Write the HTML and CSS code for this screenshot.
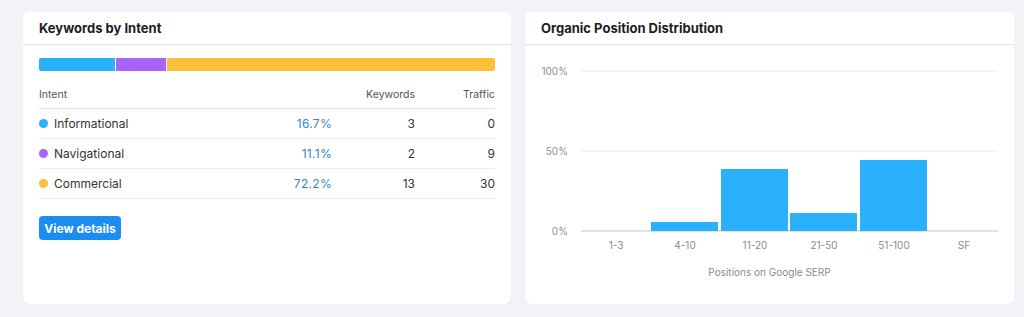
FILE: index.html
```html
<!DOCTYPE html>
<html lang="en">
<head>
    <meta charset="UTF-8">
    <meta name="viewport" content="width=device-width, initial-scale=1.0">
    <title>Overview</title>
    <link rel="stylesheet" href="styles.css">
</head>
<body>

<div class="cards">
    <!-- Keywords by intent -->
    <div class="card">
        <div class="card-head">Keywords by Intent</div>
        <div class="card-body intent-body">
            <div class="intent-bar">
                <span class="seg seg-info" style="width: 16.7%"></span>
                <span class="seg seg-nav" style="width: 11.1%"></span>
                <span class="seg seg-com" style="width: 72.2%"></span>
            </div>

            <div class="intent-table">
                <div class="row row-head">
                    <span>Intent</span>
                    <span></span>
                    <span class="num">Keywords</span>
                    <span class="num">Traffic</span>
                </div>
                <div class="row">
                    <span class="name"><i class="dot dot-info"></i>Informational</span>
                    <span class="num pct">16.7%</span>
                    <span class="num">3</span>
                    <span class="num">0</span>
                </div>
                <div class="row">
                    <span class="name"><i class="dot dot-nav"></i>Navigational</span>
                    <span class="num pct">11.1%</span>
                    <span class="num">2</span>
                    <span class="num">9</span>
                </div>
                <div class="row">
                    <span class="name"><i class="dot dot-com"></i>Commercial</span>
                    <span class="num pct">72.2%</span>
                    <span class="num">13</span>
                    <span class="num">30</span>
                </div>
            </div>

            <button type="button" class="details-btn">View details</button>
        </div>
    </div>

    <!-- Organic position distribution -->
    <div class="card">
        <div class="card-head">Organic Position Distribution</div>
        <div class="card-body">
            <svg class="chart" width="489" height="259" viewBox="0 0 489 259">
                <g class="grid">
                    <line x1="56" y1="26" x2="473" y2="26"></line>
                    <line x1="56" y1="106" x2="473" y2="106"></line>
                </g>
                <line class="axis" x1="56" y1="186" x2="473" y2="186"></line>

                <g class="ylabels" text-anchor="end">
                    <text x="43" y="30">100%</text>
                    <text x="43" y="110">50%</text>
                    <text x="43" y="190">0%</text>
                </g>

                <!-- 1 / 7 / 2 / 8 keywords out of 18 -->
                <g class="bars">
                    <rect x="126" y="177" width="67" height="9"></rect>
                    <rect x="196" y="124" width="67" height="62"></rect>
                    <rect x="265" y="168" width="67" height="18"></rect>
                    <rect x="335" y="115" width="67" height="71"></rect>
                </g>

                <g class="xlabels" text-anchor="middle">
                    <text x="91" y="204">1-3</text>
                    <text x="160" y="204">4-10</text>
                    <text x="230" y="204">11-20</text>
                    <text x="299" y="204">21-50</text>
                    <text x="369" y="204">51-100</text>
                    <text x="439" y="204">SF</text>
                </g>

                <text class="xtitle" x="244.5" y="231" text-anchor="middle">Positions on Google SERP</text>
            </svg>
        </div>
    </div>
</div>

</body>
</html>
```

FILE: styles.css
```css
body {
    font-family: Inter, "Noto Sans", Arial, sans-serif;
    margin: 0;
    padding: 0;
    background-color: #f2f3f7;
    color: #333;
}

.cards {
    display: grid;
    grid-template-columns: 488px 489px;
    gap: 14px;
    padding: 12px 10px 0 23px;
}

.card {
    height: 292px;
    background-color: #fff;
    border-radius: 6px;
    box-shadow: 0 1px 2px rgba(0, 0, 0, 0.06);
    overflow: hidden;
}

.card-head {
    height: 32px;
    line-height: 32px;
    padding-left: 16px;
    font-size: 13px;
    font-weight: 700;
    color: #1d1d1f;
    border-bottom: 1px solid #e7e8ea;
    box-shadow: 0 1px 1px rgba(0, 0, 0, 0.03);
}

/* Left card */
.intent-body {
    padding: 13px 16px 0 16px;
}

.intent-bar {
    display: flex;
    gap: 1px;
    height: 13px;
}

.seg {
    display: block;
    height: 100%;
}

.seg-info {
    background-color: #2bb0fc;
    border-radius: 2px 0 0 2px;
}

.seg-nav {
    background-color: #a865f5;
}

.seg-com {
    background-color: #fbbf3a;
    border-radius: 0 2px 2px 0;
}

.intent-table {
    margin-top: 10px;
}

.row {
    display: grid;
    grid-template-columns: 1fr 60px 83px 80px;
    align-items: center;
    height: 29px;
    font-size: 12px;
    border-bottom: 1px solid #ececee;
}

.row-head {
    height: 26px;
    padding-bottom: 1px;
    font-size: 10.5px;
    color: #555;
    border-bottom-color: #dcdde0;
}

.num {
    text-align: right;
}

.pct {
    color: #3585c8;
    letter-spacing: 0.3px;
}

.name {
    display: flex;
    align-items: center;
}

.dot {
    width: 9px;
    height: 9px;
    border-radius: 50%;
    margin-right: 6px;
}

.dot-info {
    background-color: #2bb0fc;
}

.dot-nav {
    background-color: #a865f5;
}

.dot-com {
    background-color: #fbbf3a;
}

.details-btn {
    margin-top: 17px;
    width: 82px;
    height: 24px;
    padding: 0;
    background-color: #1a8cf2;
    color: #fff;
    border: none;
    border-radius: 4px;
    font-family: inherit;
    font-size: 12px;
    font-weight: 700;
    cursor: pointer;
}

.details-btn:hover {
    background-color: #0f78d6;
}

/* Right card chart */
.chart {
    display: block;
    font-family: Inter, "Noto Sans", Arial, sans-serif;
}

.grid line {
    stroke: #ececee;
    stroke-width: 1;
}

.axis {
    stroke: #d9dadd;
    stroke-width: 1.5;
}

.bars rect {
    fill: #2bb0fe;
}

.ylabels text {
    font-size: 10px;
    fill: #8a8a8a;
}

.xlabels text {
    font-size: 10px;
    fill: #8a8a8a;
}

.xtitle {
    font-size: 10px;
    fill: #8a8a8a;
}
```
